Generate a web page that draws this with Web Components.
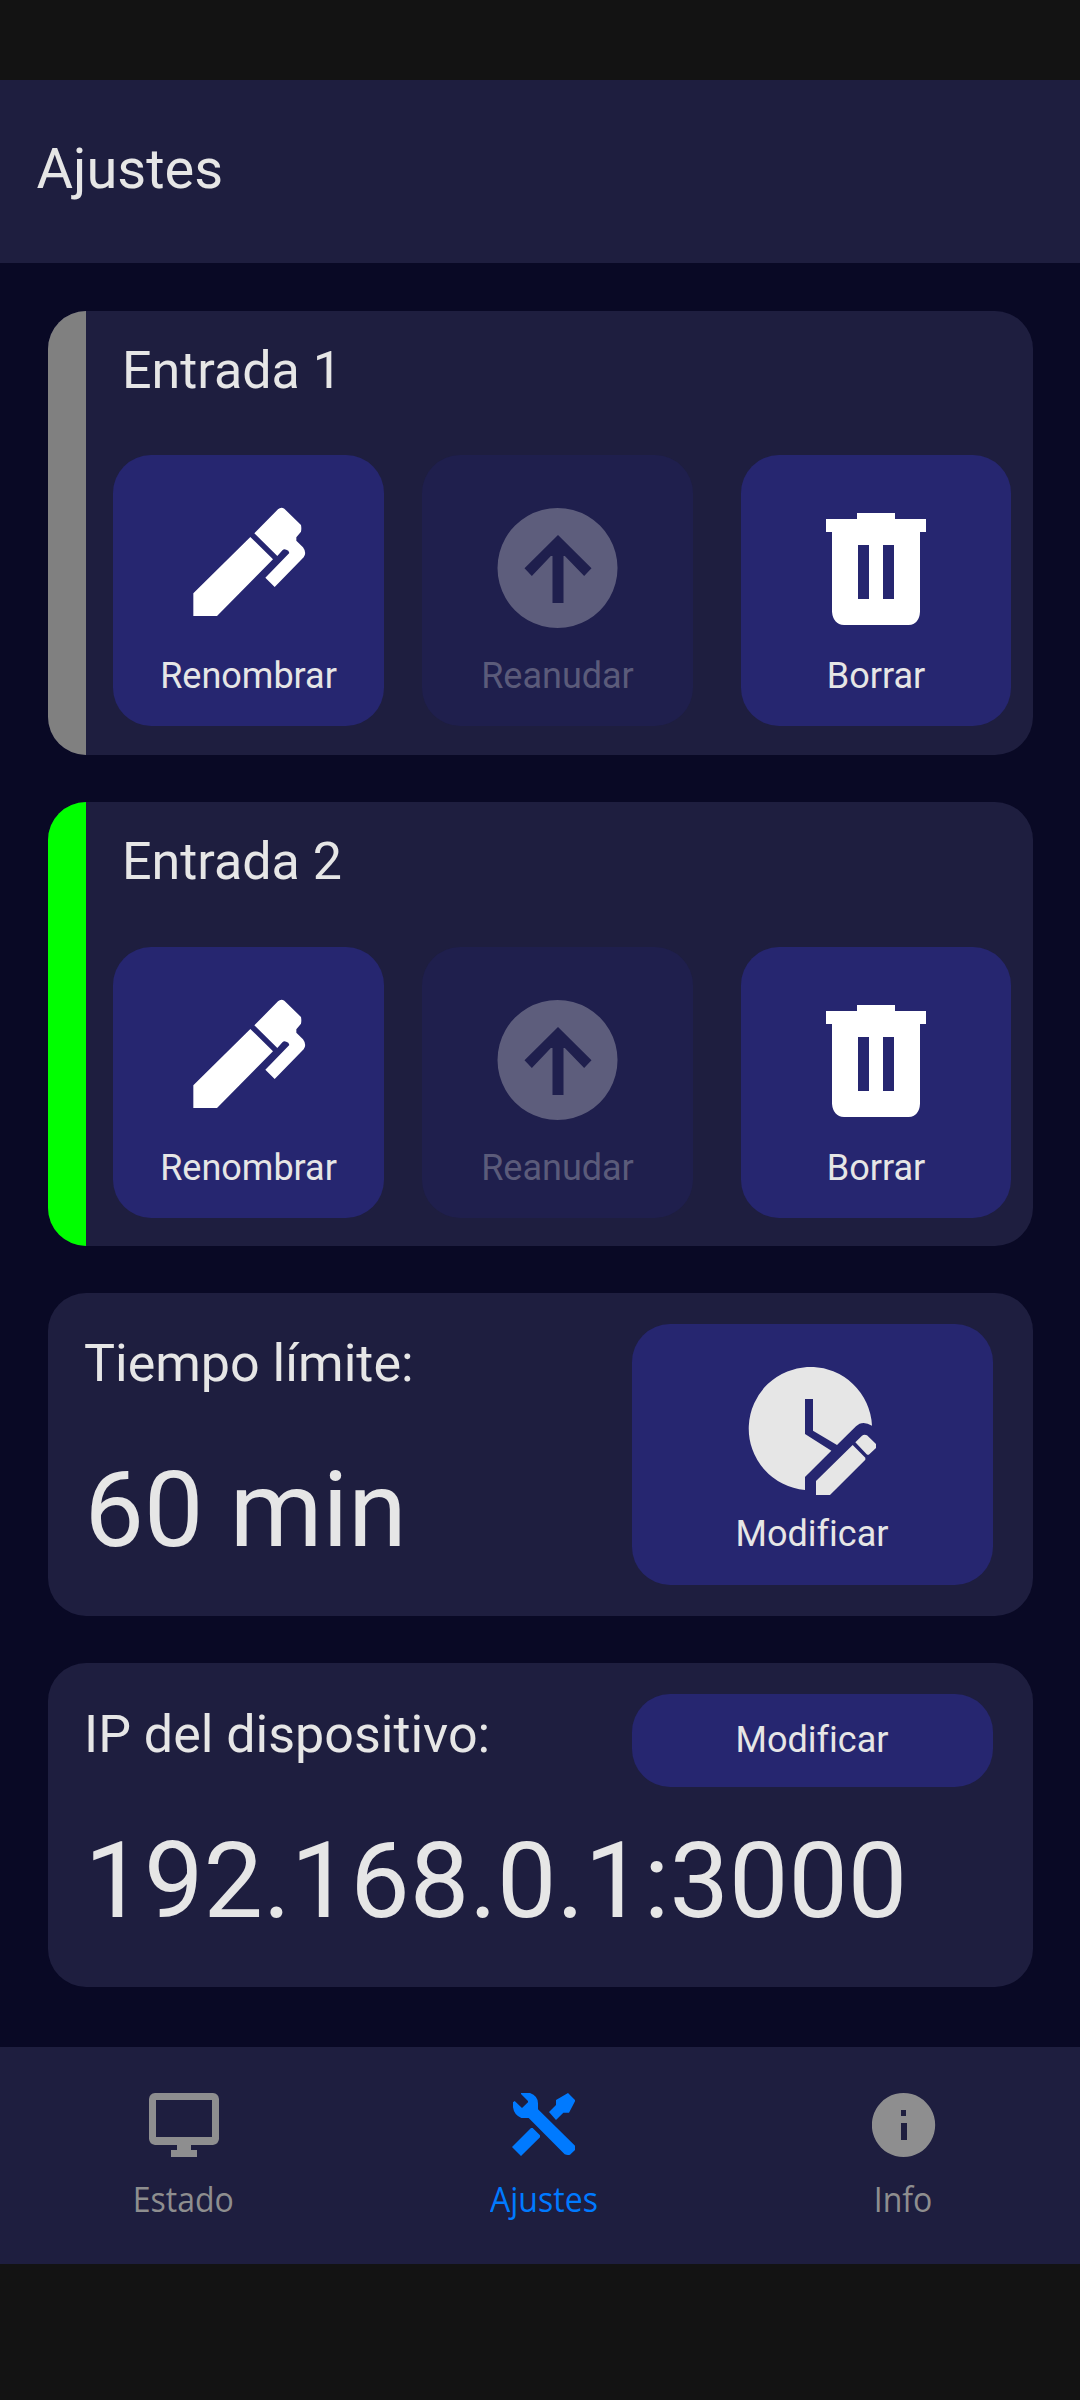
<!DOCTYPE html>
<html lang="es">
<head>
<meta charset="utf-8">
<title>Ajustes</title>
<style>
html,body{margin:0;padding:0;background:#131313}
body{font-family:Roboto,sans-serif;font-variant-ligatures:none;color:#e6e6e6;--bar:#1e1e3f;--page:#090925;--button:#262670}
</style>
</head>
<body>
<settings-app></settings-app>

<script>
const ICONS = {
  pen: ['440 168 432 432', 'M489 460L660 291L728 358L560 528H489ZM672 280L743 208Q752 199 762 206L812 255Q814 265 812 275L798 292V302L818 322Q830 338 820 352L733 441L705 413L777 339L774 332Q762 324 757 330L741 348Z'],
  up: ['256.500 168 432 432', 'M471 204a180 180 0 1 0 .1 0ZM472.500 285L573 385L551 408L493 348H489V489H456V348H451L394 408L372 385Z'],
  trash: ['312 168 432 432', 'M378 237H471V219H585V237H678V276H660V515Q658 552 626 555H432Q399 552 396 515V276H378ZM474 315V477H507V315ZM549 315V477H582V315Z'],
  clock: ['444 291 384 384', 'M615 660A185 185 0 1 1 816 467Q787 450 768 469L711 525L639 482V387H615V492L694 542L615 621ZM648 633L758 525L796 563V569L690 675H648ZM766 517L786 497Q793 492 801 496L828 522V534L808 553Q804 556 800 553Z'],
  monitor: ['147 159 210 192', 'M165 159H339Q355 161 357 177V297Q355 313 339 315H273V330H291V351H213V330H231V315H165Q149 313 147 297V177Q149 161 165 159ZM168 180V291H336V180Z'],
  tools: ['186 159 192 192', 'M213 159H240Q264 168 264 190V208L375 317V330L360 344Q353 347 344 343L236 234H214Q192 225 189 202V187L194 183L216 204L234 187V183L213 162ZM297 216L318 195V180L354 159L375 180V184L357 218H340L318 240ZM186 321L243 264H248L270 286V292L213 348Z'],
  info: ['156 159 192 192', 'M250.500 159a95 96 0 1 0 .1 0ZM243 210V228H258V210ZM243 249V300H261V249Z']
};

function define(name, render) {
  customElements.define(name, class extends HTMLElement {
    connectedCallback() {
      if (this.shadowRoot) return;
      this.attachShadow({ mode: 'open' }).innerHTML = render(this);
    }
  });
}

define('app-icon', el => {
  const [box, path] = ICONS[el.getAttribute('name')];
  return `<style>:host{display:block}svg{display:block;width:100%;height:100%;fill:currentColor;fill-rule:evenodd}</style>
    <svg viewBox="${box}" aria-hidden="true"><path d="${path}"/></svg>`;
});

define('action-button', () => `<style>
  :host{display:flex;flex-direction:column;align-items:center;flex:none;box-sizing:border-box;width:271px;height:271px;padding-top:41px;border-radius:38px;background:var(--button);font-size:36px;line-height:36px}
  ::slotted(app-icon){width:144px;height:144px;margin-bottom:18px;color:#fff}
  :host([disabled]){background:#1f1f4d;color:#5b5b7a}
  :host([disabled]) ::slotted(app-icon){color:#5d5d7c}
  :host([wide]){width:361px;height:261px;padding-top:43px}
  :host([wide]) ::slotted(app-icon){width:128px;height:128px;margin-bottom:21px;color:#e6e6e6}
  :host([slim]){width:361px;height:93px;padding-top:28px}
</style><slot name="icon"></slot><span><slot></slot></span>`);

define('entry-card', el => `<style>
  :host{display:flex;height:444px;border-radius:38px;background:var(--bar);overflow:hidden}
  .state{flex:none;width:38px;background:${el.getAttribute('state')}}
  .body{flex:1;padding:30px 0 0 27px}
  .title{font-size:52px;line-height:60px;padding-left:9px}
  .actions{display:flex;margin-top:54px}
  :host(:nth-of-type(2)) .actions{margin-top:55px}
  .actions action-button:nth-child(2){margin:0 48px 0 38px}
  .actions action-button:nth-child(3){width:270px}
</style>
<div class="state"></div>
<div class="body">
  <div class="title"><slot></slot></div>
  <div class="actions">
    <action-button><app-icon slot="icon" name="pen"></app-icon>Renombrar</action-button>
    <action-button disabled><app-icon slot="icon" name="up"></app-icon>Reanudar</action-button>
    <action-button><app-icon slot="icon" name="trash"></app-icon>Borrar</action-button>
  </div>
</div>`);

define('value-card', () => `<style>
  :host{display:flex;justify-content:space-between;align-items:flex-start;box-sizing:border-box;height:323px;padding:31px 40px 0 36px;border-radius:38px;background:var(--bar)}
  .text{width:0;white-space:nowrap;padding-top:10px}
  .label{font-size:52px;line-height:60px}
  .value{font-size:105.800px;line-height:120px;margin-top:56px;padding-left:.5px}
  :host(.ip){height:324px}
  :host(.ip) .text{padding-top:11px}
</style>
<div class="text"><div class="label"><slot name="label"></slot></div><div class="value"><slot></slot></div></div>
<slot name="action"></slot>`);

define('tab-item', () => `<style>
  :host{display:flex;flex-direction:column;align-items:center;flex:0 0 360px;color:#8e8e8f;font:35px/48px "Open Sans","Noto Sans",sans-serif;padding-top:46px}
  :host([active]){color:#007aff}
  ::slotted(app-icon){width:64px;height:64px;margin-bottom:18px}
  :host([wide]) ::slotted(app-icon){width:70px}
  span{display:block;transform:scaleX(.915)}
</style><slot name="icon"></slot><span><slot></slot></span>`);

define('settings-app', () => `<style>
  :host{display:flex;flex-direction:column;box-sizing:border-box;width:1080px;height:2400px;padding:80px 0 136px;overflow:hidden;background:#131313}
  header{flex:none;box-sizing:border-box;height:183px;padding:57px 0 0 36.500px;background:var(--bar);font-size:56px;line-height:64px}
  h1{margin:0;font:inherit}
  main{flex:1;box-sizing:border-box;display:flex;flex-direction:column;gap:47px;padding:48px 47.500px 0 48px;background:var(--page)}
  nav{flex:none;display:flex;height:217px;padding-left:3.500px;background:var(--bar)}
</style>
<header><h1>Ajustes</h1></header>
<main>
  <entry-card state="#808080">Entrada 1</entry-card>
  <entry-card state="#00ff00">Entrada 2</entry-card>
  <value-card><span slot="label">Tiempo límite:</span>60 min
    <action-button wide slot="action"><app-icon slot="icon" name="clock"></app-icon>Modificar</action-button></value-card>
  <value-card class="ip"><span slot="label">IP del dispositivo:</span>192.168.0.1:3000
    <action-button slim slot="action">Modificar</action-button></value-card>
</main>
<nav>
  <tab-item wide><app-icon slot="icon" name="monitor"></app-icon>Estado</tab-item>
  <tab-item active><app-icon slot="icon" name="tools"></app-icon>Ajustes</tab-item>
  <tab-item><app-icon slot="icon" name="info"></app-icon>Info</tab-item>
</nav>`);
</script>
</body>
</html>
